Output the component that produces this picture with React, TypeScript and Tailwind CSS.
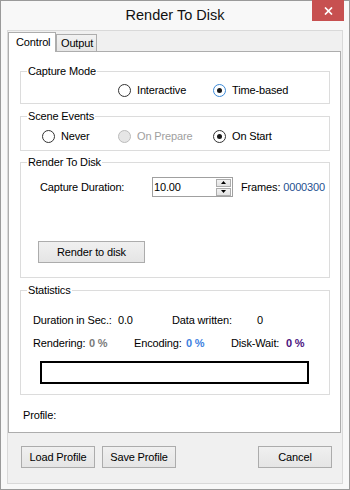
import React from "react";

function Radio({ label, checked, disabled, focus, width }: { label: string; checked?: boolean; disabled?: boolean; focus?: boolean; width?: string }) {
  const circle = disabled
    ? "border-[#bcbcbc] bg-[#e6e6e6]"
    : focus
    ? "border-[#3c8ad8] bg-white"
    : "border-[#333333] bg-white";
  return (
    <div className={`flex items-center h-[13px] ${width ?? ""}`}>
      <div className={`w-[13px] h-[13px] rounded-full border flex items-center justify-center ${circle}`}>
        {checked && <div className="w-[5px] h-[5px] rounded-full bg-[#1a1a1a]" />}
      </div>
      <span className={`ml-[6px] leading-[13px] ${disabled ? "text-[#a0a0a0]" : "text-black"}`}>{label}</span>
    </div>
  );
}

function Btn({ children, className }: { children: React.ReactNode; className?: string }) {
  return (
    <div className={`h-[22px] border border-[#acacac] bg-gradient-to-b from-[#f0f0f0] to-[#e5e5e5] flex items-center justify-center leading-[13px] ${className ?? ""}`}>
      {children}
    </div>
  );
}

export default function App() {
  return (
    <div className="relative w-[350px] h-[490px] bg-[#f8f8f8] border border-[#9a9a9a] px-[6px] pb-[5px] flex flex-col font-['Liberation_Sans',Arial,sans-serif] text-[11px] tracking-[-0.15px] text-black">
      <div className="h-[29px] flex items-center justify-center text-[14.5px] tracking-normal text-[#111]">Render To Disk</div>
      <div className="absolute top-[-1px] right-[5px] w-[32px] h-[21px] bg-[#c75050] flex items-center justify-center">
        <svg width="9" height="8" viewBox="0 0 9 8">
          <path d="M1 0.5 L8 7.5 M8 0.5 L1 7.5" stroke="white" strokeWidth="1.7" />
        </svg>
      </div>

      <div className="flex-1 border border-[#d9d9d9] bg-[#f0f0f0] flex flex-col">
        <div className="h-[20px] flex items-end">
          <div className="relative z-10 mb-[-1px] h-[20px] w-[48px] border-l border-t border-r border-[#adadad] bg-white pl-[7px] pt-[3px] leading-[13px]">
            Control
          </div>
          <div className="h-[17px] w-[41px] border-l border-t border-r border-[#adadad] bg-gradient-to-b from-[#f2f2f2] to-[#e6e6e6] pl-[4px] pt-[2px] leading-[13px]">
            Output
          </div>
        </div>

        <div className="h-[382px] w-[333px] border border-[#adadad] bg-white pt-[13px] pl-[11px] pr-[10px] flex flex-col">
          <fieldset className="border border-[#dcdcdc] h-[39px] w-[310px] p-0 m-0 min-w-0">
            <legend className="ml-[6px] px-[1px] leading-[13px]">Capture Mode</legend>
            <div className="flex mt-[6px] pl-[97px]">
              <Radio label="Interactive" width="w-[95px]" />
              <Radio label="Time-based" checked focus />
            </div>
          </fieldset>

          <fieldset className="mt-[6px] border border-[#dcdcdc] h-[41px] w-[310px] p-0 m-0 min-w-0">
            <legend className="ml-[6px] px-[1px] leading-[13px]">Scene Events</legend>
            <div className="flex mt-[7px] pl-[21px]">
              <Radio label="Never" width="w-[76px]" />
              <Radio label="On Prepare" disabled width="w-[95px]" />
              <Radio label="On Start" checked />
            </div>
          </fieldset>

          <fieldset className="mt-[5px] border border-[#dcdcdc] h-[122px] w-[310px] p-0 m-0 min-w-0">
            <legend className="ml-[6px] px-[1px] leading-[13px]">Render To Disk</legend>
            <div className="flex items-center mt-[8px] pl-[19px]">
              <span className="w-[112px] leading-[13px]">Capture Duration:</span>
              <div className="w-[81px] h-[20px] border border-[#a0a0a0] bg-white flex items-center">
                <span className="flex-1 pl-[1px] leading-[13px]">10.00</span>
                <div className="w-[15px] h-[17px] mr-[1px] flex flex-col justify-between">
                  <div className="h-[8px] border border-[#acacac] bg-gradient-to-b from-[#f2f2f2] to-[#e2e2e2] flex items-center justify-center">
                    <svg width="5" height="3" viewBox="0 0 5 3"><path d="M2.5 0 L5 3 L0 3 Z" fill="#000" /></svg>
                  </div>
                  <div className="h-[8px] border border-[#acacac] bg-gradient-to-b from-[#f2f2f2] to-[#e2e2e2] flex items-center justify-center">
                    <svg width="5" height="3" viewBox="0 0 5 3"><path d="M0 0 L5 0 L2.5 3 Z" fill="#000" /></svg>
                  </div>
                </div>
              </div>
              <span className="ml-[8px] leading-[13px]">
                Frames: <span className="text-[#1f4f8f]">0000300</span>
              </span>
            </div>
            <div className="mt-[44px] pl-[17px]">
              <Btn className="w-[107px]">Render to disk</Btn>
            </div>
          </fieldset>

          <fieldset className="mt-[6px] border border-[#dcdcdc] h-[111px] w-[310px] p-0 m-0 min-w-0">
            <legend className="ml-[6px] px-[1px] leading-[13px]">Statistics</legend>
            <div className="flex mt-[17px] pl-[12px] leading-[13px]">
              <span className="w-[85px]">Duration in Sec.:</span>
              <span className="w-[54px]">0.0</span>
              <span className="w-[85px]">Data written:</span>
              <span>0</span>
            </div>
            <div className="flex mt-[10px] pl-[12px] leading-[13px]">
              <span className="w-[56px]">Rendering:</span>
              <span className="w-[45px] font-bold text-[#7a7a7a]">0 %</span>
              <span className="w-[52px]">Encoding:</span>
              <span className="w-[45px] font-bold text-[#3d7fe0]">0 %</span>
              <span className="w-[55px]">Disk-Wait:</span>
              <span className="font-bold text-[#4b1280]">0 %</span>
            </div>
            <div className="mt-[11px] ml-[19px] w-[269px] h-[23px] border-2 border-black bg-white" />
          </fieldset>

          <div className="mt-[14px] ml-[3px] leading-[13px]">Profile:</div>
        </div>

        <div className="mt-[13px] flex pl-[13px] pr-[10px]">
          <Btn className="w-[74px]">Load Profile</Btn>
          <Btn className="w-[74px] ml-[7px]">Save Profile</Btn>
          <Btn className="w-[74px] ml-auto">Cancel</Btn>
        </div>
      </div>
    </div>
  );
}
